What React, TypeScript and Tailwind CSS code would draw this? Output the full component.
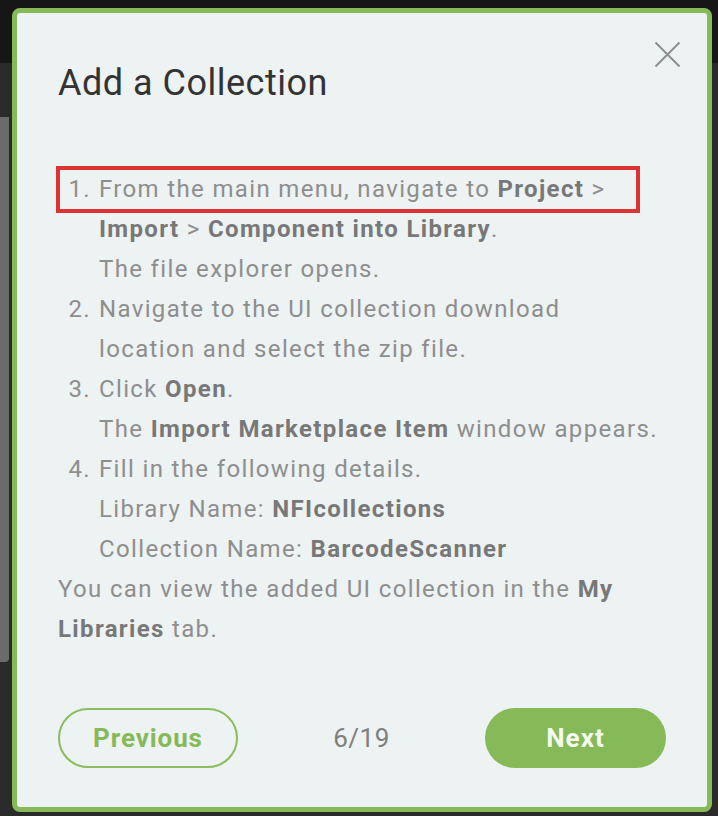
const B = "font-bold text-[#787878]";

const STEPS = [
  {
    n: "1.",
    lines: [
      <>
        From the main menu, navigate to <b className={B}>Project</b> &gt;{" "}
        <b className={B}>Import</b> &gt; <b className={B}>Component into Library</b>.
      </>,
      <>The file explorer opens.</>,
    ],
  },
  {
    n: "2.",
    lines: [<>Navigate to the UI collection download location and select the zip file.</>],
  },
  {
    n: "3.",
    lines: [
      <>
        Click <b className={B}>Open</b>.
      </>,
      <>
        The <b className={B}>Import Marketplace Item</b> window appears.
      </>,
    ],
  },
  {
    n: "4.",
    lines: [
      <>Fill in the following details.</>,
      <>
        Library Name: <b className={B}>NFIcollections</b>
      </>,
      <>
        Collection Name: <b className={B}>BarcodeScanner</b>
      </>,
    ],
  },
];

export default function App() {
  return (
    <div
      className="relative h-[816px] w-[718px] overflow-hidden bg-[#2a2a2a]"
      style={{ fontFamily: "Roboto, 'Noto Sans', sans-serif" }}
    >
      {/* app behind the modal */}
      <div className="absolute inset-x-0 top-0 h-[63px] bg-[#161616]" />
      <div className="absolute left-0 top-[117px] h-[545px] w-[9px] rounded-br-[4px] bg-[#6b6b6b]" />

      <div className="relative pl-[12px] pt-[8px]">
        <div className="flex h-[804px] w-[700px] flex-col rounded-[8px] border-[5px] border-[#86b957] bg-[#edf2f2] px-[41px] pt-[48px]">
          <div className="flex items-start justify-between">
            <h1 className="text-[36px] leading-[44px] tracking-[0.5px] text-[#333]">Add a Collection</h1>
            <button className="mr-[-15px] mt-[-20px] text-[#8f8f8f]">
              <svg width="27" height="27" viewBox="0 0 27 27" fill="none" stroke="currentColor" strokeWidth="2">
                <path d="M1.5 1.5 L25.5 25.5 M25.5 1.5 L1.5 25.5" />
              </svg>
            </button>
          </div>

          {/* Steps */}
          <div className="relative mt-[64px] pr-[6px] text-[24px] leading-[40px] tracking-[1.35px] text-[#8e8e8e]">
            <div className="pointer-events-none absolute left-[-2px] top-[-3px] h-[47px] w-[584px] border-[4px] border-[#dd3333]" />
            {STEPS.map((s) => (
              <div key={s.n} className="flex">
                <span className="w-[41px] shrink-0 pr-[8px] text-right">{s.n}</span>
                <div className="flex-1">
                  {s.lines.map((l, i) => (
                    <div key={i}>{l}</div>
                  ))}
                </div>
              </div>
            ))}
            <p>
              You can view the added UI collection in the <b className={B}>My</b>{" "}
              <b className={B}>Libraries</b> tab.
            </p>
          </div>

          {/* Footer */}
          <div className="mt-auto mb-[39px] flex items-center justify-between">
            <button className="h-[60px] w-[180px] rounded-full border-2 border-[#8cbc5e] text-[26px] font-bold tracking-[0.9px] text-[#86b957]">
              Previous
            </button>
            <span className="text-[26px] tracking-[0.5px] text-[#7f7f7f]">6/19</span>
            <button className="h-[60px] w-[181px] rounded-full bg-[#86b957] text-[26px] font-bold tracking-[1px] text-[#f4f8ee]">
              Next
            </button>
          </div>
        </div>
      </div>
    </div>
  );
}
